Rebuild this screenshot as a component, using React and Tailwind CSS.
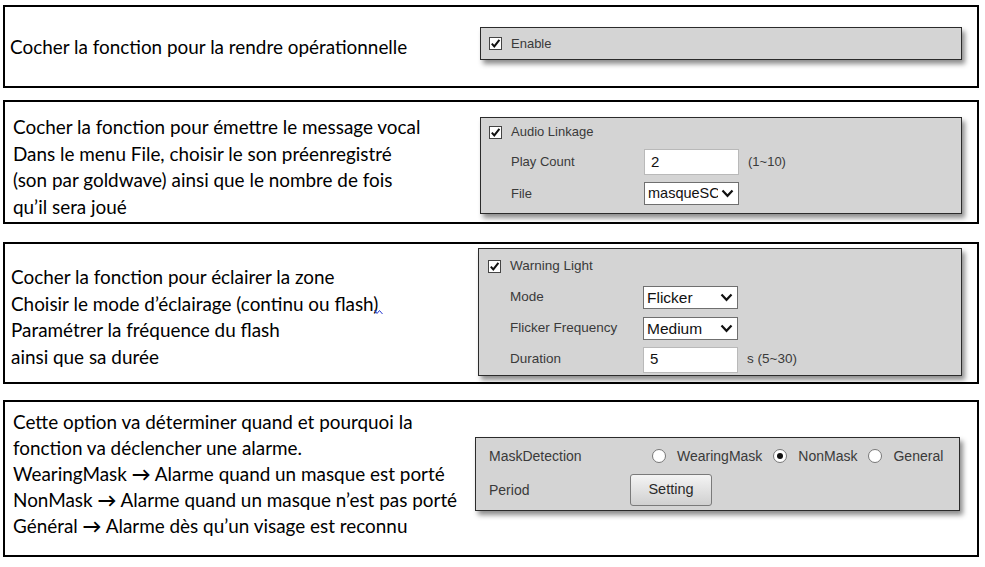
import React from "react";

const Chevron = () => (
  <svg width="13" height="9" viewBox="0 0 13 9" className="shrink-0">
    <path d="M1.5 1.5 L6.5 6.8 L11.5 1.5" fill="none" stroke="#111" strokeWidth="2.2" />
  </svg>
);

const Check = () => (
  <div className="w-[13px] h-[13px] bg-white border border-[#444] flex items-center justify-center shrink-0">
    <svg width="11" height="11" viewBox="0 0 11 11">
      <path d="M1.8 5.6 L4.3 8.4 L9.4 1.8" fill="none" stroke="#111" strokeWidth="2" />
    </svg>
  </div>
);

const Radio = ({ on }) => (
  <div className="w-[14px] h-[14px] rounded-full bg-white border border-[#777] flex items-center justify-center shrink-0">
    {on && <div className="w-[6px] h-[6px] rounded-full bg-[#111]" />}
  </div>
);

const Select = ({ value, size }) => (
  <div className={`w-[95px] h-[23px] bg-white border border-[#6f6f6f] flex items-center pl-[3px] pr-[4px] gap-[3px] text-[#111] ${size}`}>
    <div className="flex-1 overflow-hidden whitespace-nowrap">{value}</div>
    <Chevron />
  </div>
);

const Input = ({ value, size }) => (
  <div className={`w-[95px] h-[26px] bg-white border border-[#b9b9b9] flex items-center pl-[6px] text-[#111] ${size}`}>
    {value}
  </div>
);

const panel =
  "bg-[#d4d4d4] border border-[#2b2b2b] shadow-[3px_4px_5px_rgba(0,0,0,0.45)] text-[#3a3a3a] font-['Liberation_Sans',Arial,sans-serif]";

const leftText = "font-['Lato','Noto_Sans',sans-serif] text-[18.9px] text-black";

export default function App() {
  return (
    <div className="w-[985px] h-[567px] bg-white relative">
      <div className="pl-[3px] pt-[5px] flex flex-col">
        {/* Box 1 */}
        <div className="w-[976px] h-[83px] border-2 border-black flex">
          <div className={`w-[475px] pl-[5px] flex items-center pt-[1px] ${leftText}`}>
            Cocher la fonction pour la rendre opérationnelle
          </div>
          <div className="pt-[20px]">
            <div className={`${panel} w-[482px] h-[33px] flex items-center pl-[8px] gap-[9px] text-[13px]`}>
              <Check />
              <span>Enable</span>
            </div>
          </div>
        </div>

        {/* Box 2 */}
        <div className="mt-[12px] w-[976px] h-[124px] border-2 border-black flex">
          <div className={`w-[475px] pl-[8px] pt-[12px] leading-[26.5px] ${leftText}`}>
            <div>Cocher la fonction pour émettre le message vocal</div>
            <div>Dans le menu File, choisir le son préenregistré</div>
            <div>(son par goldwave) ainsi que le nombre de fois</div>
            <div>qu’il sera joué</div>
          </div>
          <div className="pt-[15px]">
            <div className={`${panel} w-[482px] h-[97px] flex flex-col text-[13px]`}>
              <div className="h-[28px] flex items-center pl-[8px] gap-[9px]">
                <Check />
                <span>Audio Linkage</span>
              </div>
              <div className="h-[32px] flex items-center pl-[30px]">
                <span className="w-[133px]">Play Count</span>
                <Input value="2" size="text-[15px]" />
                <span className="ml-[9px]">(1~10)</span>
              </div>
              <div className="h-[31px] flex items-center pl-[30px]">
                <span className="w-[133px]">File</span>
                <Select value="masqueSC" size="text-[14.5px]" />
              </div>
            </div>
          </div>
        </div>

        {/* Box 3 */}
        <div className="mt-[18px] w-[976px] h-[142px] border-2 border-black flex">
          <div className={`w-[473px] pl-[6px] pt-[20px] leading-[26.5px] ${leftText}`}>
            <div>Cocher la fonction pour éclairer la zone</div>
            <div>
              Choisir le mode d’éclairage (continu ou flash)
              <svg width="10" height="6" viewBox="0 0 10 6" className="inline-block align-baseline -ml-[4px] -mb-[4px]">
                <path d="M0.5 1 L3 4.5 L5.5 1.5 L8.5 5" fill="none" stroke="#2a3ad0" strokeWidth="1" />
              </svg>
            </div>
            <div>Paramétrer la fréquence du flash</div>
            <div>ainsi que sa durée</div>
          </div>
          <div className="pt-[4px]">
            <div className={`${panel} w-[484px] h-[128px] flex flex-col pt-[2px] text-[13.5px]`}>
              <div className="h-[31px] flex items-center pl-[9px] gap-[9px]">
                <Check />
                <span>Warning Light</span>
              </div>
              <div className="h-[31px] flex items-center pl-[31px]">
                <span className="w-[133px]">Mode</span>
                <Select value="Flicker" size="text-[15.5px]" />
              </div>
              <div className="h-[31px] flex items-center pl-[31px]">
                <span className="w-[133px]">Flicker Frequency</span>
                <Select value="Medium" size="text-[15.5px]" />
              </div>
              <div className="h-[31px] flex items-center pl-[31px]">
                <span className="w-[133px]">Duration</span>
                <Input value="5" size="text-[15px]" />
                <span className="ml-[9px]">s (5~30)</span>
              </div>
            </div>
          </div>
        </div>

        {/* Box 4 */}
        <div className="mt-[16px] w-[976px] h-[157px] border-2 border-black flex">
          <div className={`w-[470px] pl-[8px] pt-[7px] leading-[26px] ${leftText}`}>
            <div>Cette option va déterminer quand et pourquoi la</div>
            <div>fonction va déclencher une alarme.</div>
            <div>WearingMask <span className="font-bold">→</span> Alarme quand un masque est porté</div>
            <div>NonMask <span className="font-bold">→</span> Alarme quand un masque n’est pas porté</div>
            <div>Général <span className="font-bold">→</span> Alarme dès qu’un visage est reconnu</div>
          </div>
          <div className="pt-[35px]">
            <div className={`${panel} w-[485px] h-[74px] flex flex-col pt-[1px] text-[14px]`}>
              <div className="h-[34px] flex items-center pl-[13px]">
                <span className="w-[163px]">MaskDetection</span>
                <Radio />
                <span className="ml-[11px]">WearingMask</span>
                <div className="ml-[11px]"><Radio on /></div>
                <span className="ml-[11px]">NonMask</span>
                <div className="ml-[11px]"><Radio /></div>
                <span className="ml-[11px]">General</span>
              </div>
              <div className="h-[34px] flex items-center pl-[13px]">
                <span className="w-[141px]">Period</span>
                <div className="w-[82px] h-[32px] rounded-[3px] border border-[#7a7a7a] bg-gradient-to-b from-[#f4f4f4] to-[#d0d0d0] flex items-center justify-center text-[14.5px] text-[#2a2a2a]">
                  Setting
                </div>
              </div>
            </div>
          </div>
        </div>
      </div>
    </div>
  );
}
